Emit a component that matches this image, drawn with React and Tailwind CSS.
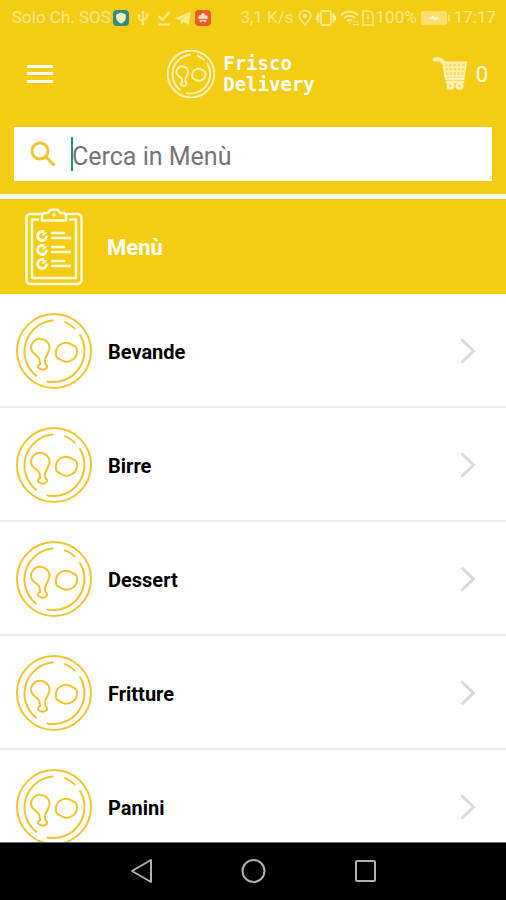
import React from 'react';

const categories = ['Bevande', 'Birre', 'Dessert', 'Fritture', 'Panini'];

const PlateIcon = ({ className, strokeWidth = 2 }) => (
  <svg
    viewBox="0 0 76 76"
    fill="none"
    stroke="currentColor"
    strokeWidth={strokeWidth}
    strokeLinecap="round"
    strokeLinejoin="round"
    className={className}
    aria-hidden="true"
  >
    <circle cx="38" cy="38" r="37" />
    <path d="M36.7 7.6 A31 31 0 0 0 20 62.6" />
    <path d="M49 9.2 Q54.500 11.500 58.700 15.600" />
    <path d="M64 22 A31 31 0 0 1 31.4 68.4" />
    {/* Drumstick */}
    <path d="M23.3 25.7 C19.5 25.7 17.5 28.3 16 31 C14.2 33.5 15 36.500 16.500 39.2 C18.5 42 22 42.800 23.3 45.7 L24.200 51 C21.500 52 21.2 54.6 23.400 55.6 C25 57 28.500 57 30.2 55.6 C31.800 54 31.200 52 29.600 51.400 C28.600 49 28.600 47 29.3 45.700 C30.2 42.800 31.800 41 32.500 38.4 C34 36 33.800 33.500 32.7 31 C30.500 27.200 27.500 25.7 23.3 25.7 Z" />
    {/* Egg */}
    <path d="M43.3 32.3 Q46.500 29.600 50 29.7 Q54 29.800 56.7 32.3 Q60.700 33.500 61 36.7 Q61.300 40 60 43 Q58.800 45.800 56 47 Q53 49 49.3 48.7 Q46 48 43.3 46 Q40.200 45 40 42.3 Q39.400 39 40.7 35.7 Q41.200 33.500 43.3 32.3 Z" />
  </svg>
);

const ClipboardIcon = () => (
  <svg
    viewBox="0 0 58 78"
    fill="none"
    stroke="currentColor"
    strokeWidth="2.500"
    strokeLinecap="round"
    strokeLinejoin="round"
    className="h-[78px] w-[58px]"
    aria-hidden="true"
  >
    <path d="M16 6 H6 Q1.500 6 1.500 10 V71.500 Q1.500 76 6 76 H52 Q56.500 76 56.500 71.500 V10 Q56.500 6 52 6 H42" />
    <path d="M13 11.500 H7 V70 H51 V11.500 H45" />
    <path d="M17 12.500 V8 Q17 5 20 5 H23 Q24 1.500 29 1.500 Q34 1.500 35 5 H38 Q41 5 41 8 V12.500 Z" />
    <circle cx="29" cy="7" r="1" strokeWidth="1.500" />
    {[28, 42, 56].map((y) => (
      <g key={y}>
        <path d={`M18 ${y - 4.5} A4.500 4.500 0 1 0 21.500 ${y + 1}`} strokeWidth="3" />
        <path d={`M18 ${y - 1} L20.500 ${y - 3}`} strokeWidth="2" />
        <path d={`M27 ${y - 3} H39 M27 ${y + 2} H45`} />
      </g>
    ))}
  </svg>
);

const CartIcon = () => (
  <svg
    viewBox="0 0 36 34"
    fill="none"
    stroke="currentColor"
    strokeWidth="1.500"
    strokeLinecap="round"
    strokeLinejoin="round"
    className="h-[34px] w-9"
    aria-hidden="true"
  >
    <path d="M2.500 2.500 H8 L12 6" strokeWidth="4" />
    <path d="M11 5.500 H34 L31.500 22 H14 Z" fill="currentColor" fillOpacity="0.5" strokeWidth="2" />
    <path d="M12 10 H33 M13 14.500 H32 M13 19 H31" />
    <path d="M16 6 L18 22 M20.500 6 L21 22 M25 6 L24.500 22 M29.500 6 L28 22" />
    <path d="M15 25 H31" strokeWidth="3" />
    <circle cx="18.500" cy="29" r="2.500" strokeWidth="3" />
    <circle cx="27.500" cy="29" r="2.500" strokeWidth="3" />
  </svg>
);

const StatusBar = () => (
  <div className="flex h-9 items-center justify-between pl-3 pr-[10px] text-[17px] whitespace-nowrap text-[#fbe98f]">
    <div className="flex items-center">
      <span>Solo Ch. SOS</span>
      <svg viewBox="0 0 16 16" className="ml-[2px] h-4 w-4" aria-hidden="true">
        <rect width="16" height="16" rx="4" fill="#2e8b86" />
        <path d="M8 2.500 L12.800 4.500 V8 Q12.500 11.500 8 13.500 Q3.500 11.500 3.200 8 V4.500 Z" fill="#f8efb8" />
      </svg>
      <svg viewBox="0 0 12 18" fill="none" stroke="currentColor" strokeWidth="1.500" className="ml-2 h-[18px] w-3" aria-hidden="true">
        <path d="M6 3 V15 M6 12.500 L2 10 V7 M6 11 L10 9 V6" />
        <path d="M6 1 L8 4 H4 Z" fill="currentColor" stroke="none" />
        <circle cx="6" cy="15" r="1.600" fill="currentColor" stroke="none" />
        <circle cx="2" cy="6.500" r="1.400" fill="currentColor" stroke="none" />
        <rect x="8.800" y="4.500" width="2.500" height="2.500" fill="currentColor" stroke="none" />
      </svg>
      <svg viewBox="0 0 14 16" fill="none" stroke="currentColor" strokeWidth="2" className="ml-2 h-4 w-[14px]" aria-hidden="true">
        <path d="M1.500 6 L5.500 10 L12.500 2 M1 14.500 H13" />
      </svg>
      <svg viewBox="0 0 16 16" fill="currentColor" className="ml-1 h-4 w-4" aria-hidden="true">
        <path d="M0 8.500 L16 1.500 L13.500 15 L8.500 11.500 L6.500 14 L5.500 10.500 L12.500 4.500 L4.200 10 Z" />
      </svg>
      <svg viewBox="0 0 16 16" className="ml-1 h-4 w-4" aria-hidden="true">
        <rect width="16" height="16" rx="4" fill="#e85a30" />
        <path d="M8 3 C9.500 3 10 4.500 10 5.500 C12 4.500 13.500 7 12.500 9 H3.500 C2.500 7 4 4.500 6 5.500 C6 4.500 6.500 3 8 3 Z M4 10 H12 L10.500 12.500 L8 11 L5.500 12.500 Z" fill="#fbdcae" />
      </svg>
    </div>
    <div className="flex items-center">
      <span>3,1 K/s</span>
      <svg viewBox="0 0 14 18" fill="none" stroke="currentColor" strokeWidth="1.500" className="ml-1 h-[18px] w-[14px]" aria-hidden="true">
        <path d="M7 16 C4 12.500 1.200 10 1.200 7 A5.800 5.500 0 0 1 12.800 7 C12.800 10 10 12.500 7 16 Z" />
        <circle cx="7" cy="7" r="1.500" fill="currentColor" />
      </svg>
      <svg viewBox="0 0 20 18" fill="none" stroke="currentColor" strokeWidth="1.800" className="ml-1 h-[18px] w-5" aria-hidden="true">
        <rect x="5" y="2" width="10" height="14" rx="1.500" />
        <path d="M2.500 4 V14 M17.500 4 V14 M0.800 6.500 V11.500 M19.200 6.500 V11.500" />
      </svg>
      <svg viewBox="0 0 20 18" fill="none" stroke="currentColor" strokeWidth="2" className="ml-1 h-[18px] w-5" aria-hidden="true">
        <path d="M1 6 Q9.500 -1 18 6 M4 9 Q9.500 4.500 15 9 M7 12 Q9.500 10 12 12" />
        <circle cx="9.500" cy="14.500" r="1" fill="currentColor" stroke="none" />
        <path d="M13 13 H19 M13 15.500 H19" strokeWidth="1.200" />
      </svg>
      <svg viewBox="0 0 12 16" fill="none" stroke="currentColor" strokeWidth="1.600" className="ml-[2px] h-4 w-3" aria-hidden="true">
        <path d="M1 1 H8 L11 4 V15 H1 Z M6 4.500 V9.500 M6 11 V12.500" />
      </svg>
      <span className="ml-[2px]">100%</span>
      <svg viewBox="0 0 29 14" className="ml-1 h-[14px] w-[29px]" aria-hidden="true">
        <rect width="26" height="14" rx="2" fill="#f9e06d" />
        <rect x="27" y="4" width="2" height="6" fill="#f9e06d" />
        <path d="M7 8 L13 4.500 V6.500 H19 L13.500 10 V8 Z" fill="#fdf6cf" />
      </svg>
      <span className="ml-1">17:17</span>
    </div>
  </div>
);

const Header = () => (
  <header className="bg-[#f4cc13] pb-[13px]">
    <StatusBar />
    <div className="grid grid-cols-[1fr_auto_1fr] items-center px-[18px] pt-[14px] text-white">
      <button type="button" aria-label="Apri menù" className="flex h-11 w-11 items-center justify-center">
        <svg viewBox="0 0 26 20" className="h-5 w-[26px]" fill="currentColor" aria-hidden="true">
          <rect y="1" width="26" height="3" />
          <rect y="8" width="26" height="3" />
          <rect y="16" width="26" height="3" />
        </svg>
      </button>
      <div className="mr-6 flex items-center gap-2">
        <PlateIcon className="h-12 w-12 text-[#fef3bd]" strokeWidth={3} />
        <h1 className="font-['DejaVu_Sans_Mono',monospace] text-[19px] leading-[21px] font-bold">
          Frisco
          <br />
          Delivery
        </h1>
      </div>
      <button type="button" aria-label="Carrello" className="flex items-center gap-2 justify-self-end text-[#fff0b3]">
        <CartIcon />
        <span className="text-[22px] text-[#fffbe8]">0</span>
      </button>
    </div>
    <label className="relative mx-[14px] mt-[29px] flex h-[54px] items-center bg-white pl-4">
      <svg viewBox="0 0 26 26" fill="none" stroke="#f0c52c" strokeWidth="3" className="h-[26px] w-[26px] shrink-0" aria-hidden="true">
        <circle cx="10" cy="10" r="8" />
        <path d="M15.500 15.500 L24.500 24.500" />
      </svg>
      <input
        type="text"
        aria-label="Cerca in Menù"
        placeholder="Cerca in Menù"
        className="ml-4 h-full min-w-0 flex-1 pt-1 text-[25px] text-black caret-[#14967c] outline-none placeholder:text-[#757575]"
      />
      <span className="absolute left-[57px] h-[34px] w-[2px] bg-[#14967c]" />
    </label>
  </header>
);

const CategoryRow = ({ name }) => (
  <li className="h-[114px] shrink-0 border-b-2 border-[#ebebeb]">
    <a href="#" className="flex h-full items-center pt-[2px] pr-[30px] pl-4">
      <PlateIcon className="h-[76px] w-[76px] text-[#efc42f]" />
      <span className="ml-4 flex-1 pt-[2px] text-[20px] font-bold text-black">{name}</span>
      <svg viewBox="0 0 16 26" fill="none" stroke="#d8d8d8" strokeWidth="3" className="h-[26px] w-4" aria-hidden="true">
        <path d="M1.500 1.500 L13.500 13 L1.500 24.500" />
      </svg>
    </a>
  </li>
);

const NavBar = () => (
  <nav className="flex h-[58px] shrink-0 items-center justify-center gap-[86px] border-t border-[#6b6b6b] bg-black text-[#b0b0b0]">
    <button type="button" aria-label="Indietro">
      <svg viewBox="0 0 26 26" fill="none" stroke="currentColor" strokeWidth="2" strokeLinejoin="round" className="h-[26px] w-[26px]" aria-hidden="true">
        <path d="M23 1 V23 L4 12 Z" />
      </svg>
    </button>
    <button type="button" aria-label="Home">
      <svg viewBox="0 0 26 26" fill="none" stroke="currentColor" strokeWidth="2" className="h-[26px] w-[26px]" aria-hidden="true">
        <circle cx="13.500" cy="12" r="11" />
      </svg>
    </button>
    <button type="button" aria-label="Recenti">
      <svg viewBox="0 0 26 26" fill="none" stroke="currentColor" strokeWidth="2" className="h-[26px] w-[26px]" aria-hidden="true">
        <rect x="4" y="2" width="19" height="20" rx="1" />
      </svg>
    </button>
  </nav>
);

const App = () => {
  return (
    <div className="flex h-screen flex-col bg-white font-[Roboto,sans-serif]">
      <Header />
      <main className="mt-[5px] flex min-h-0 flex-1 flex-col">
        <div className="flex h-[95px] shrink-0 items-center bg-[#f4cc13] pl-[25px] text-[#fffbe0]">
          <ClipboardIcon />
          <h2 className="ml-6 pt-[2px] text-[22px] font-bold text-white">Menù</h2>
        </div>
        <ul className="flex min-h-0 flex-1 flex-col overflow-hidden">
          {categories.map((name) => (
            <CategoryRow key={name} name={name} />
          ))}
        </ul>
      </main>
      <NavBar />
    </div>
  );
};

export default App;
